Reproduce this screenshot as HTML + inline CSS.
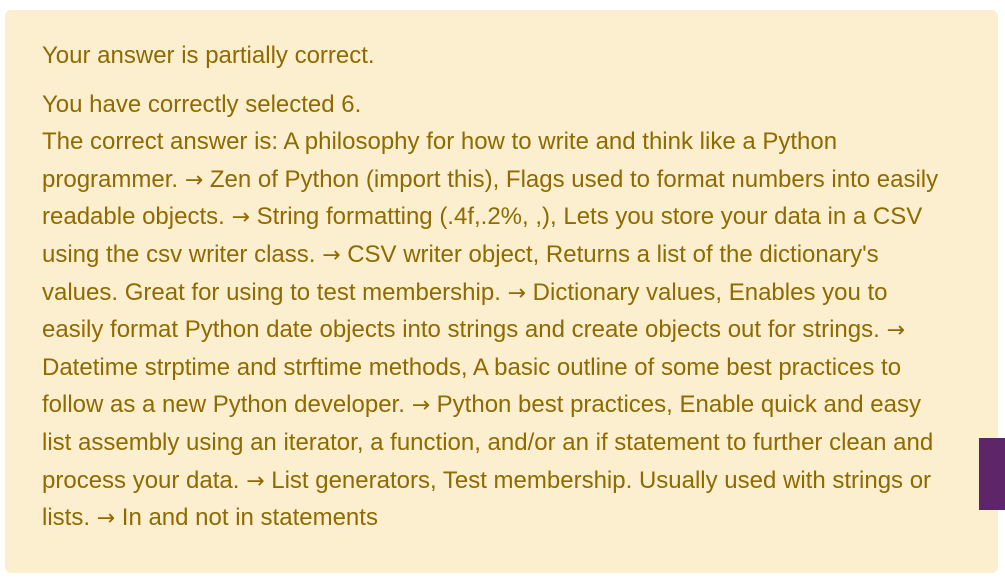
<!DOCTYPE html>
<html><head><style>
body{margin:0;width:1005px;height:582px;background:#fff;overflow:hidden;font-family:"Liberation Sans",Arial,sans-serif;}
.box{position:absolute;left:5px;top:10px;width:993px;height:563px;background:#fcefcf;border-radius:6px;box-sizing:border-box;padding:27px 50px 0 37px;color:#8f6a00;font-size:24px;}
p{margin:0;line-height:37.6px;}
.p1{margin-bottom:11px;}
.a{font-family:"DejaVu Sans",sans-serif;font-size:22px;line-height:10px;}
.purple{position:absolute;left:979px;top:438px;width:26px;height:72px;background:#5f2569;}
</style></head><body>
<div class="box">
<p class="p1">Your answer is partially correct.</p>
<p>You have correctly selected 6.<br>The correct answer is: A philosophy for how to write and think like a Python programmer. <span class="a">→</span> Zen of Python (import this), Flags used to format numbers into easily readable objects. <span class="a">→</span> String formatting (.4f,.2%, ,), Lets you store your data in a CSV using the csv writer class. <span class="a">→</span> CSV writer object, Returns a list of the dictionary's values. Great for using to test membership. <span class="a">→</span> Dictionary values, Enables you to easily format Python date objects into strings and create objects out for strings. <span class="a">→</span> Datetime strptime and strftime methods, A basic outline of some best practices to follow as a new Python developer. <span class="a">→</span> Python best practices, Enable quick and easy list assembly using an iterator, a function, and/or an if statement to further clean and process your data. <span class="a">→</span> List generators, Test membership. Usually used with strings or lists. <span class="a">→</span> In and not in statements</p>
</div>
<div class="purple"></div>
</body></html>
